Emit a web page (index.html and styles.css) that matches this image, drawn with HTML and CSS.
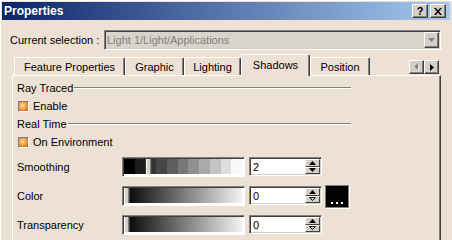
FILE: index.html
```html
<!DOCTYPE html>
<html lang="en">

<head>
    <meta charset="UTF-8">
    <meta name="viewport" content="width=device-width, initial-scale=1.0">
    <title>Properties</title>
    <link rel="stylesheet" href="styles.css">
</head>

<body>

    <div class="window">
        <div class="titlebar">
            <span class="title">Properties</span>
            <div class="caption-buttons">
                <span class="caption-btn">?</span>
                <span class="caption-btn">
                    <svg width="8" height="7" viewBox="0 0 8 7"><path d="M0 0h2l2 2.4L6 0h2L5 3.5 8 7H6L4 4.6 2 7H0l3-3.5z" fill="#000"/></svg>
                </span>
            </div>
        </div>

        <div class="selection">
            <span class="selection-label">Current selection :</span>
            <div class="combo">
                <span class="combo-text">Light 1/Light/Applications</span>
                <span class="combo-btn">
                    <svg width="7" height="4" viewBox="0 0 7 4"><path d="M0 0h7L3.5 4z" fill="#808080"/></svg>
                </span>
            </div>
        </div>

        <div class="tabs">
            <span class="tab tab-feature">Feature Properties</span>
            <span class="tab tab-graphic">Graphic</span>
            <span class="tab tab-lighting">Lighting</span>
            <span class="tab tab-shadows active">Shadows</span>
            <span class="tab tab-position">Position</span>
            <div class="tab-scroll">
                <span class="scroll-btn">
                    <svg width="5" height="8" viewBox="0 0 5 8"><path d="M4 0v7L0.5 3.5z" fill="#808080"/><path d="M5 1v7L4 7z" fill="#fff"/></svg>
                </span>
                <span class="scroll-btn">
                    <svg width="4" height="7" viewBox="0 0 4 7"><path d="M0 0v7l4-3.5z" fill="#000"/></svg>
                </span>
            </div>
        </div>

        <div class="panel">
            <div class="group-title"><span>Ray Traced</span><span class="rule"></span></div>
            <div class="check-row"><span class="checkbox"></span>Enable</div>
            <div class="group-title"><span>Real Time</span><span class="rule"></span></div>
            <div class="check-row"><span class="checkbox"></span>On Environment</div>

            <div class="fields">
                <div class="field-row">
                    <span class="field-label">Smoothing</span>
                    <div class="slider">
                        <div class="track steps">
                            <span class="thumb" style="left: 22px"></span>
                        </div>
                    </div>
                    <div class="spin">
                        <span class="spin-value">2</span>
                        <span class="spin-btns">
                            <span class="spin-btn"><svg width="7" height="4" viewBox="0 0 7 4"><path d="M3.5 0L7 4H0z" fill="#000"/></svg></span>
                            <span class="spin-btn"><svg width="7" height="4" viewBox="0 0 7 4"><path d="M0 0h7L3.5 4z" fill="#000"/></svg></span>
                        </span>
                    </div>
                </div>

                <div class="field-row">
                    <span class="field-label">Color</span>
                    <div class="slider">
                        <div class="track ramp">
                            <span class="thumb" style="left: 0px"></span>
                        </div>
                    </div>
                    <div class="spin">
                        <span class="spin-value">0</span>
                        <span class="spin-btns">
                            <span class="spin-btn"><svg width="7" height="4" viewBox="0 0 7 4"><path d="M3.5 0L7 4H0z" fill="#000"/></svg></span>
                            <span class="spin-btn"><svg width="7" height="4" viewBox="0 0 7 4"><path d="M0.5 0.5h6L3.5 3.5z" fill="none" stroke="#000"/></svg></span>
                        </span>
                    </div>
                    <span class="color-btn">
                        <svg width="12" height="2" viewBox="0 0 12 2"><rect x="0" width="2" height="2" fill="#fff"/><rect x="5" width="2" height="2" fill="#fff"/><rect x="10" width="2" height="2" fill="#fff"/></svg>
                    </span>
                </div>

                <div class="field-row">
                    <span class="field-label">Transparency</span>
                    <div class="slider">
                        <div class="track ramp">
                            <span class="thumb" style="left: 0px"></span>
                        </div>
                    </div>
                    <div class="spin">
                        <span class="spin-value">0</span>
                        <span class="spin-btns">
                            <span class="spin-btn"><svg width="7" height="4" viewBox="0 0 7 4"><path d="M3.5 0L7 4H0z" fill="#000"/></svg></span>
                            <span class="spin-btn"><svg width="7" height="4" viewBox="0 0 7 4"><path d="M0.5 0.5h6L3.5 3.5z" fill="none" stroke="#000"/></svg></span>
                        </span>
                    </div>
                </div>
            </div>
        </div>
    </div>

</body>

</html>
```

FILE: styles.css
```css
html,
body {
    margin: 0;
    padding: 0;
    height: 240px;
    overflow: hidden;
}

body {
    background-color: #ece1d4;
    font-family: "Liberation Sans", Arial, sans-serif;
    font-size: 11px;
    color: #000;
}

.window {
    height: 100%;
    box-sizing: border-box;
    display: flex;
    flex-direction: column;
    padding: 2px 2px 0 2px;
    box-shadow: inset 1px 1px 0 #fff;
}

/* title bar */
.titlebar {
    flex: none;
    height: 18px;
    display: flex;
    align-items: center;
    justify-content: space-between;
    padding: 0 4px 0 2px;
    background: linear-gradient(to right, #0a246a, #a6caf0);
}

.title {
    color: #fff;
    font-weight: bold;
    font-size: 12px;
}

.caption-buttons {
    display: flex;
    gap: 2px;
}

.caption-btn {
    width: 16px;
    height: 14px;
    box-sizing: border-box;
    display: flex;
    align-items: center;
    justify-content: center;
    background-color: #d4d0c8;
    border: 1px solid;
    border-color: #fff #404040 #404040 #fff;
    box-shadow: inset -1px -1px 0 #808080;
    font-weight: bold;
    font-size: 11px;
}

/* current selection */
.selection {
    flex: none;
    display: flex;
    align-items: center;
    height: 20px;
    margin: 10px 0 0 8px;
}

.selection-label {
    width: 94px;
}

.combo {
    width: 337px;
    height: 20px;
    box-sizing: border-box;
    display: flex;
    align-items: center;
    padding: 1px 1px 1px 2px;
    border: 1px solid;
    border-color: #808080 #fff #fff #808080;
    box-shadow: inset 1px 1px 0 #404040, inset -1px -1px 0 #d4d0c8;
    background-color: #d8d3cb;
    color: #808080;
}

.combo-btn {
    margin-left: auto;
    width: 15px;
    height: 16px;
    box-sizing: border-box;
    display: flex;
    align-items: center;
    justify-content: center;
    background-color: #d4d0c8;
    border: 1px solid;
    border-color: #fff #404040 #404040 #fff;
    box-shadow: inset -1px -1px 0 #808080;
}

/* tabs */
.tabs {
    flex: none;
    display: flex;
    align-items: flex-end;
    height: 21px;
    margin: 4px 11px 0 12px;
}

.tab {
    height: 18px;
    box-sizing: border-box;
    display: flex;
    align-items: center;
    justify-content: center;
    border-top: 1px solid #fff;
    border-left: 1px solid #fff;
    border-right: 1px solid #404040;
    box-shadow: inset -1px 0 0 #808080;
    border-radius: 2px 2px 0 0;
}

.tab-feature { width: 111px; }
.tab-graphic { width: 59px; }
.tab-lighting { width: 57px; }
.tab-shadows { width: 69px; }
.tab-position { width: 60px; }

.tab.active {
    height: 22px;
    margin-bottom: -1px;
    padding-bottom: 1px;
    background-color: #ece1d4;
    position: relative;
    z-index: 1;
}

.tab-scroll {
    display: flex;
    margin: 0 0 1px auto;
}

.scroll-btn {
    width: 15px;
    height: 14px;
    box-sizing: border-box;
    display: flex;
    align-items: center;
    justify-content: center;
    background-color: #d4d0c8;
    border: 1px solid;
    border-color: #fff #404040 #404040 #fff;
    box-shadow: inset -1px -1px 0 #808080;
}

/* panel */
.panel {
    flex: 1;
    min-height: 0;
    overflow: hidden;
    margin: 0 9px 0 10px;
    padding: 3px 0 0 4px;
    border-top: 1px solid #fff;
    border-left: 1px solid #fff;
    border-right: 1px solid #404040;
    box-shadow: inset -1px 0 0 #808080;
}

.group-title {
    display: flex;
    align-items: center;
    width: 334px;
    height: 18px;
}

.rule {
    flex: 1;
    height: 0;
    margin-left: 1px;
    border-top: 1px solid #808080;
    border-bottom: 1px solid #fff;
}

.check-row {
    display: flex;
    align-items: center;
    height: 18px;
}

.checkbox {
    width: 11px;
    height: 11px;
    box-sizing: border-box;
    margin: 0 4px 0 1px;
    border: 1px solid;
    border-color: #808080 #fff #fff #808080;
    background: radial-gradient(circle at 40% 40%, #fcd9a0, #ec9438 55%, #b2561a);
}

.fields {
    display: flex;
    flex-direction: column;
    gap: 9px;
    margin-top: 6px;
}

.field-row {
    display: flex;
    align-items: center;
    height: 20px;
}

.field-label {
    width: 105px;
}

.slider {
    width: 123px;
    height: 20px;
    box-sizing: border-box;
    padding: 1px 2px 2px 1px;
    border: 1px solid;
    border-color: #808080 #fff #fff #808080;
    background-color: #fff;
    box-shadow: inset 1px 1px 0 #404040;
}

.track {
    position: relative;
    height: 100%;
}

.steps {
    background: linear-gradient(to right,
        #000 0 9.09%, #1c1c1c 9.09% 18.18%, #333 18.18% 27.27%,
        #474747 27.27% 36.36%, #5e5e5e 36.36% 45.45%, #777 45.45% 54.55%,
        #909090 54.55% 63.64%, #aaa 63.64% 72.73%, #c4c4c4 72.73% 81.82%,
        #dedede 81.82% 90.91%, #f8f8f8 90.91% 100%);
}

.ramp {
    background: linear-gradient(to right, #000, #f4f4f4);
}

.thumb {
    position: absolute;
    top: 0;
    bottom: 0;
    width: 6px;
    box-sizing: border-box;
    background-color: #d4d0c8;
    border-left: 1px solid #fff;
    border-right: 1px solid #404040;
    box-shadow: inset -1px 0 0 #808080;
}

.spin {
    width: 73px;
    height: 19px;
    box-sizing: border-box;
    margin: -1px 0 0 4px;
    padding-left: 2px;
    display: flex;
    align-items: center;
    border: 1px solid;
    border-color: #808080 #fff #fff #808080;
    box-shadow: inset 1px 1px 0 #404040, inset -1px -1px 0 #d4d0c8;
    background-color: #fff;
}

.spin-value {
    margin-left: 1px;
}

.spin-btns {
    margin: 0 1px 0 auto;
    width: 15px;
    height: 15px;
    display: flex;
    flex-direction: column;
}

.spin-btn {
    flex: 1;
    box-sizing: border-box;
    display: flex;
    align-items: center;
    justify-content: center;
    background-color: #d4d0c8;
    border: 1px solid;
    border-color: #fff #404040 #404040 #fff;
}

.color-btn {
    width: 24px;
    height: 23px;
    box-sizing: border-box;
    margin-left: 3px;
    padding-bottom: 3px;
    display: flex;
    align-items: flex-end;
    justify-content: center;
    background-color: #000;
    border: 1px solid #808080;
    box-shadow: 1px 1px 0 #fff;
}
```
